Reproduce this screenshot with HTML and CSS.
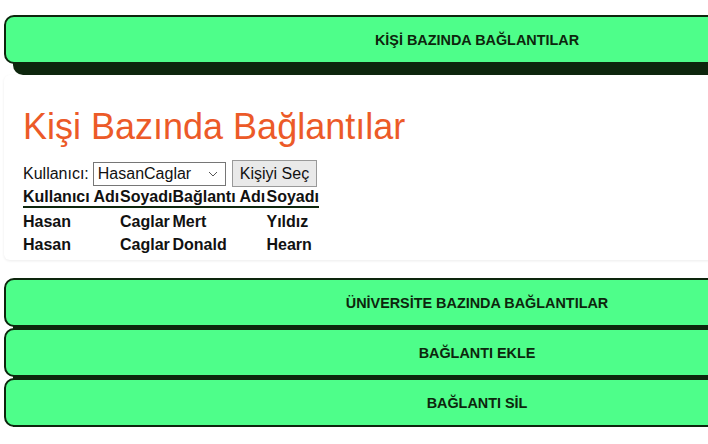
FILE: index.html
```html
<!DOCTYPE html>
<html lang="tr">
<head>
<meta charset="utf-8">
<link rel="stylesheet" href="styles.css">
</head>
<body>
<div class="page">
  <button class="acc acc-top">KİŞİ BAZINDA BAĞLANTILAR</button>
  <div class="panel">
    <h1 class="title">Kişi Bazında Bağlantılar</h1>
    <form class="pick">
      <label class="lbl">Kullanıcı:</label>
      <select class="sel"><option>HasanCaglar</option></select>
      <button type="button" class="btn">Kişiyi Seç</button>
    </form>
    <table class="tbl">
      <thead>
        <tr><th>Kullanıcı Adı</th><th>Soyadı</th><th>Bağlantı Adı</th><th>Soyadı</th></tr>
      </thead>
      <tbody>
        <tr><td>Hasan</td><td>Caglar</td><td>Mert</td><td>Yıldız</td></tr>
        <tr><td>Hasan</td><td>Caglar</td><td>Donald</td><td>Hearn</td></tr>
      </tbody>
    </table>
  </div>
  <div class="stack">
    <button class="acc">ÜNİVERSİTE BAZINDA BAĞLANTILAR</button>
    <button class="acc">BAĞLANTI EKLE</button>
    <button class="acc">BAĞLANTI SİL</button>
  </div>
</div>
</body>
</html>
```
FILE: styles.css
```css
html, body {
  margin: 0;
  padding: 0;
  overflow: hidden;
  background: #fff;
  font-family: Arial, "Liberation Sans", sans-serif;
}
.page {
  width: 960px;
  padding: 0 0 0 4px;
}
.acc {
  display: block;
  box-sizing: border-box;
  width: 946px;
  height: 49px;
  margin: 0;
  padding: 0;
  background: #4efe8a;
  border: 2px solid #0d260d;
  border-radius: 10px;
  box-shadow: 9px 11px 0 #0d260d;
  font: bold 14.4px Arial, "Liberation Sans", sans-serif;
  color: #0d260d;
  text-align: center;
  position: relative;
}
.acc-top {
  margin-top: 15px;
}
.stack {
  display: flex;
  flex-direction: column;
  gap: 1px;
  margin-top: 18px;
}
.panel {
  margin-top: 11px;
  background: #fff;
  border-radius: 6px;
  box-shadow: 0 1px 3px rgba(0,0,0,0.08);
  padding: 30px 0 4px 19px;
}
.title {
  margin: 0 0 11px;
  font-weight: normal;
  font-size: 36px;
  color: #ec5a28;
  line-height: 44px;
}
.pick {
  display: flex;
  align-items: center;
  margin: 0;
  font-size: 16px;
  color: #111;
}
.lbl { margin-right: 4px; }
.sel {
  appearance: none;
  -webkit-appearance: none;
  box-sizing: border-box;
  width: 133px;
  height: 24px;
  padding: 0 20px 0 4px;
  font: 16px Arial, "Liberation Sans", sans-serif;
  color: #111;
  border: 1px solid #767676;
  border-radius: 0;
  background: #fff url("data:image/svg+xml;utf8,<svg xmlns='http://www.w3.org/2000/svg' width='10' height='6' viewBox='0 0 10 6'><path d='M1 1l4 4 4-4' fill='none' stroke='%23555' stroke-width='1'/></svg>") no-repeat right 7px center;
  margin-right: 6px;
}
.btn {
  box-sizing: border-box;
  height: 27px;
  padding: 0 7px;
  font: 16px Arial, "Liberation Sans", sans-serif;
  background: #e9e9e9;
  border: 1px solid #999;
  border-radius: 0;
  color: #111;
}
.tbl {
  border-collapse: collapse;
  margin-top: 1px;
  font-size: 16px;
  font-weight: bold;
  color: #111;
}
.tbl th, .tbl td {
  padding: 0;
  text-align: left;
}
.tbl th {
  height: 18px;
  line-height: 18px;
}
.tbl td {
  height: 23px;
  line-height: 23px;
}
.tbl thead tr {
  border-bottom: 2px solid #0d260d;
}
.tbl tbody tr:first-child td {
  padding-top: 2px;
}
.tbl th:nth-child(1), .tbl td:nth-child(1) { width: 97px; }
.tbl th:nth-child(3), .tbl td:nth-child(3) { width: 94px; }
```
